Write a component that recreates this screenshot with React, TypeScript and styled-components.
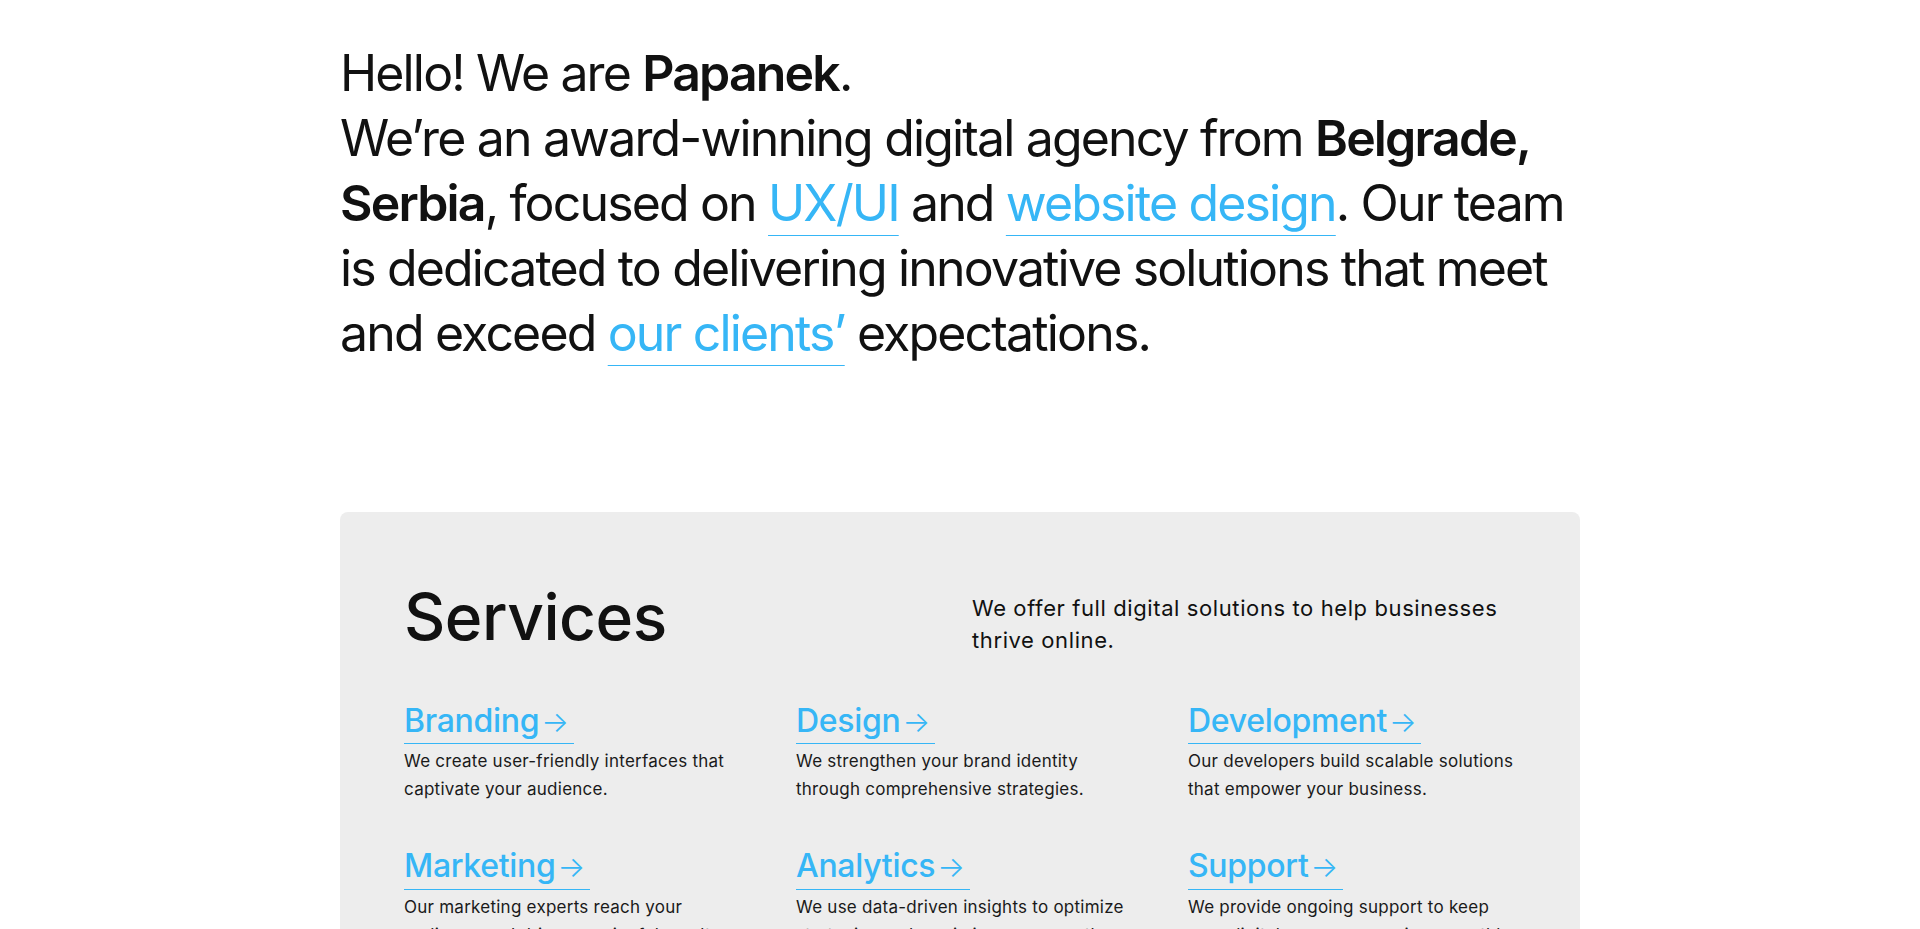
import React from "react";
import styled, { createGlobalStyle } from "styled-components";

const GlobalStyle = createGlobalStyle`
  html, body {
    margin: 0;
    padding: 0;
    background: #ffffff;
  }
  body {
    font-family: Inter, "Open Sans", "Liberation Sans", sans-serif;
    color: #111111;
    -webkit-font-smoothing: antialiased;
  }
  * { box-sizing: border-box; }
`;

const ACCENT = "#36b6f6";

const Page = styled.main`
  width: 1240px;
  margin: 0 auto;
  padding: 41px 0 80px;
`;

const Intro = styled.p`
  margin: 0;
  font-size: 50px;
  line-height: 65px;
  font-weight: 400;
  letter-spacing: -1.85px;
  color: #111111;
`;

const Strong = styled.strong`
  font-weight: 600;
`;

const InlineLink = styled.a`
  color: ${ACCENT};
  text-decoration: underline;
  text-decoration-color: ${ACCENT};
  text-decoration-thickness: 1px;
  text-underline-offset: 14px;
`;

const Card = styled.section`
  margin-top: 146px;
  background: #ededed;
  border-radius: 8px;
  padding: 67px 64px 64px;
`;

const CardHeader = styled.div`
  display: grid;
  grid-template-columns: 1fr 1fr;
  column-gap: 24px;
  align-items: start;
`;

const Title = styled.h2`
  margin: 0;
  font-size: 64px;
  line-height: 1.2;
  font-weight: 500;
  letter-spacing: -0.5px;
  color: #111111;
`;

const Lead = styled.p`
  margin: 13px 0 0;
  font-size: 22px;
  line-height: 32px;
  font-weight: 400;
  letter-spacing: 0.6px;
  color: #111111;
`;

const ServiceGrid = styled.div`
  margin-top: 46px;
  display: grid;
  grid-template-columns: repeat(3, 1fr);
  column-gap: 64px;
  row-gap: 44px;
`;

const ServiceItem = styled.article`
  display: flex;
  flex-direction: column;
  align-items: flex-start;
`;

const ServiceLink = styled.a`
  display: inline-flex;
  align-items: baseline;
  padding: 0 5px 3px 0;
  font-size: 32px;
  line-height: 1.2;
  font-weight: 500;
  letter-spacing: -0.3px;
  color: ${ACCENT};
  text-decoration: none;
  border-bottom: 1px solid ${ACCENT};
`;

const Arrow = styled.span`
  font-weight: 300;
  font-size: 29px;
  margin-left: 2px;
`;

const ServiceText = styled.p`
  margin: 3px 0 0;
  max-width: 340px;
  font-size: 17px;
  line-height: 28px;
  font-weight: 400;
  letter-spacing: 0.25px;
  color: #1a1a1a;
`;

const services = [
  { name: "Branding", text: "We create user-friendly interfaces that captivate your audience." },
  { name: "Design", text: "We strengthen your brand identity through comprehensive strategies." },
  { name: "Development", text: "Our developers build scalable solutions that empower your business." },
  { name: "Marketing", text: "Our marketing experts reach your audience and drive meaningful results." },
  { name: "Analytics", text: "We use data-driven insights to optimize strategies and maximize your growth." },
  { name: "Support", text: "We provide ongoing support to keep your digital presence running smoothly." },
];

export default function App() {
  return (
    <>
      <GlobalStyle />
      <Page>
        <Intro>
          Hello! We are <Strong>Papanek</Strong>.
          <br />
          We’re an award-winning digital agency from <Strong>Belgrade, Serbia</Strong>, focused on{" "}
          <InlineLink href="#">UX/UI</InlineLink> and <InlineLink href="#">website design</InlineLink>. Our team
          is dedicated to delivering innovative solutions that meet and exceed{" "}
          <InlineLink href="#">our clients’</InlineLink> expectations.
        </Intro>
        <Card>
          <CardHeader>
            <Title>Services</Title>
            <Lead>We offer full digital solutions to help businesses thrive online.</Lead>
          </CardHeader>
          <ServiceGrid>
            {services.map((s) => (
              <ServiceItem key={s.name}>
                <ServiceLink href="#">
                  {s.name}
                  <Arrow>→</Arrow>
                </ServiceLink>
                <ServiceText>{s.text}</ServiceText>
              </ServiceItem>
            ))}
          </ServiceGrid>
        </Card>
      </Page>
    </>
  );
}
